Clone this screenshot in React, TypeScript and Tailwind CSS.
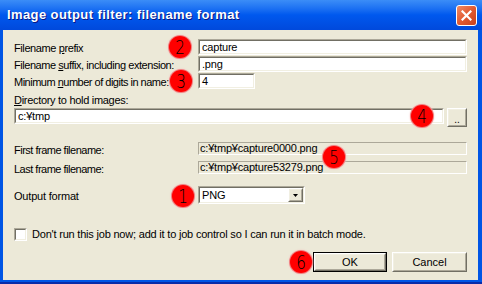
import React from "react";

const font = { fontFamily: '"Liberation Sans", Arial, sans-serif' };

function Sunken({ className, children }: { className?: string; children?: React.ReactNode }) {
  return (
    <div className={`border border-t-[#aca899] border-l-[#aca899] border-r-white border-b-white ${className ?? ""}`}>
      <div className="h-full flex items-center border border-t-[#716f64] border-l-[#716f64] border-r-[#f1efe2] border-b-[#f1efe2] bg-white pl-[2px] text-[11px] tracking-[-0.2px] text-black">
        {children}
      </div>
    </div>
  );
}

function Raised({ className, children }: { className?: string; children?: React.ReactNode }) {
  return (
    <div className={`border border-t-white border-l-white border-r-[#716f64] border-b-[#716f64] bg-[#ece9d8] ${className ?? ""}`}>
      <div className="h-full flex items-center justify-center border border-t-[#f1efe2] border-l-[#f1efe2] border-r-[#aca899] border-b-[#aca899]">
        {children}
      </div>
    </div>
  );
}

function Badge({ n, x, y }: { n: string; x: number; y: number }) {
  return (
    <div
      className="absolute w-[22px] h-[22px] rounded-full bg-[#ff0000] flex items-center justify-center text-black text-[19px] leading-none shadow-[0_0_0_1px_#f08080,0_0_2px_1px_#f7c0c0]"
      style={{ left: x, top: y, fontFamily: '"DejaVu Sans", sans-serif', fontWeight: 200 }}
    >
      <span className="scale-x-[0.8] inline-block">{n}</span>
    </div>
  );
}

function Label({ className, children }: { className?: string; children: React.ReactNode }) {
  return (
    <span className={`text-[11px] text-black whitespace-nowrap ${className ?? "tracking-[-0.2px]"}`}>
      {children}
    </span>
  );
}

export default function App() {
  return (
    <div className="relative w-[482px] h-[284px] flex flex-col bg-[#0055e5] border-b-[2px] border-[#0a2ba8] overflow-hidden" style={font}>
      {/* title bar */}
      <div className="h-[30px] shrink-0 flex items-center justify-between pl-[7px] pr-[5px] bg-gradient-to-b from-[#3b8df7] via-[#0058ee] to-[#0049dc]">
        <span className="text-white font-bold text-[13px] tracking-[0.4px] [text-shadow:1px_1px_0_#0a1883]">
          Image output filter: filename format
        </span>
        <div className="w-[21px] h-[21px] rounded-[3px] border border-white bg-gradient-to-br from-[#ef8a64] via-[#e25a31] to-[#c9401d] flex items-center justify-center">
          <svg width="11" height="11" viewBox="0 0 11 11">
            <path d="M1.5 1.5 L9.5 9.5 M9.5 1.5 L1.5 9.5" stroke="white" strokeWidth="2.2" strokeLinecap="square" />
          </svg>
        </div>
      </div>

      {/* client area */}
      <div className="flex-1 ml-[3px] mr-[4px] mb-[2px] bg-[#ece9d8] flex flex-col pl-[11px] pr-[11px]">
        <div className="mt-[9px] flex items-center h-[16px]">
          <div className="w-[184px]">
            <Label className="tracking-[-0.4px]">Filename <u>p</u>refix</Label>
          </div>
          <Sunken className="flex-1 h-[16px]">capture</Sunken>
        </div>
        <div className="mt-[1px] flex items-center h-[16px]">
          <div className="w-[184px]">
            <Label className="tracking-[-0.45px]">Filename <u>s</u>uffix, including extension:</Label>
          </div>
          <Sunken className="flex-1 h-[16px]">.png</Sunken>
        </div>
        <div className="mt-[1px] flex items-center h-[16px]">
          <div className="w-[184px]">
            <Label className="text-[10.5px] tracking-[-0.5px]">Minimum <u>n</u>umber of digits in name:</Label>
          </div>
          <Sunken className="w-[57px] h-[16px]">4</Sunken>
        </div>
        <div className="mt-[4px] h-[14px] flex items-center">
          <Label className="tracking-[-0.3px]"><u>D</u>irectory to hold images:</Label>
        </div>
        <div className="mt-[1px] flex items-start gap-[3px] h-[19px]">
          <Sunken className="flex-1 h-[16px]">c:¥tmp</Sunken>
          <Raised className="w-[20px] h-[19px]">
            <span className="text-[10px] leading-none mt-[4px]">..</span>
          </Raised>
        </div>
        <div className="mt-[15px] flex items-center h-[13px]">
          <div className="w-[184px]">
            <Label className="tracking-[-0.5px]">First frame filename:</Label>
          </div>
          <div className="flex-1 h-[13px] flex items-center border border-t-[#aca899] border-l-[#aca899] border-r-white border-b-white pl-[1px]">
            <Label>c:¥tmp¥capture0000.png</Label>
          </div>
        </div>
        <div className="mt-[6px] flex items-center h-[13px]">
          <div className="w-[184px]">
            <Label className="tracking-[-0.5px]">Last frame filename:</Label>
          </div>
          <div className="flex-1 h-[13px] flex items-center border border-t-[#aca899] border-l-[#aca899] border-r-white border-b-white pl-[1px]">
            <Label>c:¥tmp¥capture53279.png</Label>
          </div>
        </div>
        <div className="mt-[12px] flex items-center h-[18px]">
          <div className="w-[184px]">
            <Label>Output format</Label>
          </div>
          <div className="w-[107px] h-[18px] border border-t-[#aca899] border-l-[#aca899] border-r-white border-b-white">
            <div className="h-full flex items-center border border-t-[#716f64] border-l-[#716f64] border-r-[#f1efe2] border-b-[#f1efe2] bg-white">
              <span className="flex-1 pl-[2px] text-[11px] tracking-[-0.2px]">PNG</span>
              <Raised className="w-[15px] h-[14px]">
                <svg width="5" height="3" viewBox="0 0 5 3">
                  <path d="M0 0 H5 L2.5 3 Z" fill="black" />
                </svg>
              </Raised>
            </div>
          </div>
        </div>
        <div className="mt-[24px] flex items-center gap-[5px] h-[13px]">
          <div className="w-[13px] h-[13px] border border-t-[#aca899] border-l-[#aca899] border-r-white border-b-white">
            <div className="h-full border border-t-[#716f64] border-l-[#716f64] border-r-[#f1efe2] border-b-[#f1efe2] bg-white" />
          </div>
          <Label>Don't run this job now; add it to job control so I can run it in batch mode.</Label>
        </div>
        <div className="mt-[11px] flex justify-end gap-[5px]">
          <div className="w-[74px] h-[20px] border border-black">
            <Raised className="h-full">
              <span className="text-[11px]">OK</span>
            </Raised>
          </div>
          <Raised className="w-[75px] h-[20px]">
            <span className="text-[11px]">Cancel</span>
          </Raised>
        </div>
      </div>

      <Badge n="2" x={169} y={36} />
      <Badge n="3" x={170} y={70} />
      <Badge n="4" x={411} y={105} />
      <Badge n="5" x={323} y={146} />
      <Badge n="1" x={172} y={185} />
      <Badge n="6" x={290} y={251} />
    </div>
  );
}
